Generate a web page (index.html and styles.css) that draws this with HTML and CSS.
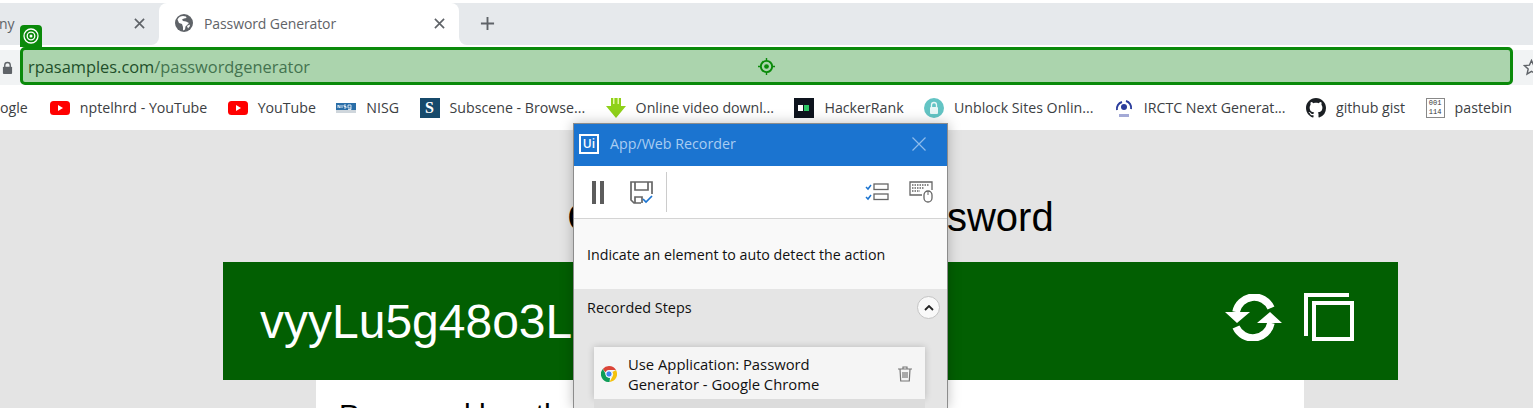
FILE: index.html
```html
<!DOCTYPE html>
<html lang="en">
<head>
  <meta charset="UTF-8">
  <title>Password Generator</title>
  <link rel="stylesheet" href="styles.css">
</head>
<body>

  <section class="tabbar">
    <div class="tab tab-old">
      <span class="tab-title">ny</span>
      <svg class="tab-close" viewBox="0 0 12 12"><path d="M1 1l10 10M11 1L1 11"/></svg>
    </div>
    <div class="tab tab-active">
      <svg class="globe" viewBox="0 0 18 18"><circle cx="9" cy="9" r="9" fill="#5f6368"/><path d="M8 2C6 2 3.5 3 2.5 5.5L4 9l3 1 1 3v3.5l2-1 .5-3L14 9l-3-1.5L8 7 7 5.500 9 4.500l2.500-.5L11 2.500z" fill="#fff"/><path d="M12 12l2.500-1.500.5 1.500-2 2.500z" fill="#fff"/></svg>
      <span class="tab-title">Password Generator</span>
      <svg class="tab-close" viewBox="0 0 12 12"><path d="M1 1l10 10M11 1L1 11"/></svg>
    </div>
    <div class="tab tab-rest">
      <svg class="new-tab" viewBox="0 0 16 16"><path d="M8 1v14M1 8h14"/></svg>
    </div>
  </section>

  <section class="toolbar">
    <svg class="lock" viewBox="0 0 12 14"><path d="M3 6V4a3 3 0 0 1 6 0v2" fill="none" stroke="#5f6368" stroke-width="1.5"/><rect x="1" y="5.5" width="10" height="8" rx="1" fill="#5f6368"/></svg>
    <svg class="star" viewBox="0 0 18 18"><path d="M9 1.500l2.200 5 5.300.5-4 3.600 1.200 5.300L9 13.100l-4.700 2.800 1.200-5.300-4-3.600 5.300-.5z"/></svg>
  </section>

  <nav class="bookmarks">
    <span class="bm bm-cut">ogle</span>
    <a class="bm">
      <svg class="yt" viewBox="0 0 20 14"><rect width="20" height="14" rx="3.5" fill="#f00"/><path d="M8 4l5 3-5 3z" fill="#fff"/></svg>
      nptelhrd - YouTube
    </a>
    <a class="bm">
      <svg class="yt" viewBox="0 0 20 14"><rect width="20" height="14" rx="3.5" fill="#f00"/><path d="M8 4l5 3-5 3z" fill="#fff"/></svg>
      YouTube
    </a>
    <a class="bm">
      <svg class="ico" viewBox="0 0 20 20"><rect y="5" width="20" height="7" fill="#2a6ea8"/><rect y="12" width="20" height="3" fill="#cfd6dc"/><path d="M2 10V7l2 3V7M6 7v3M8 10h2V8.500H8V7h2M12 7h3v3h-3zM15 10v1.500h-3" fill="none" stroke="#fff" stroke-width=".8"/></svg>
      NISG
    </a>
    <a class="bm">
      <span class="ico-sub">S</span>
      Subscene - Browse...
    </a>
    <a class="bm">
      <svg class="ico" viewBox="0 0 20 20"><path d="M5 0h10v8h5L10 20 0 8h5z" fill="#8fd11a"/><path d="M7 0h1.500v6H7zM11.500 0H13v6h-1.500z" fill="#e6f7a8"/></svg>
      Online video downl...
    </a>
    <a class="bm">
      <span class="ico-hr"><i></i></span>
      HackerRank
    </a>
    <a class="bm">
      <svg class="ico" viewBox="0 0 20 20"><circle cx="10" cy="10" r="10" fill="#63c4c4"/><rect x="6" y="9" width="8" height="7" rx="1" fill="#e8f7f7"/><path d="M7.500 9V7a2.500 2.500 0 0 1 5 0v2" fill="none" stroke="#e8f7f7" stroke-width="1.300"/></svg>
      Unblock Sites Onlin...
    </a>
    <a class="bm">
      <svg class="ico" viewBox="0 0 20 20"><path d="M3 12a7 7 0 0 1 5-8M12 3a7 7 0 0 1 5 8" fill="none" stroke="#2a3c9c" stroke-width="2"/><circle cx="10" cy="9" r="3" fill="#2a3c9c"/><rect x="5" y="16" width="10" height="3" fill="#a3a9d6"/></svg>
      IRCTC Next Generat...
    </a>
    <a class="bm">
      <svg class="ico" viewBox="0 0 16 16"><path fill="#1b1f23" d="M8 0C3.580 0 0 3.580 0 8c0 3.540 2.290 6.530 5.470 7.590.4.070.55-.17.55-.38 0-.19-.01-.82-.01-1.490-2.010.37-2.530-.49-2.690-.94-.09-.23-.48-.94-.82-1.130-.28-.15-.68-.52-.01-.53.630-.01 1.080.58 1.230.82.720 1.210 1.870.87 2.330.66.070-.52.280-.87.510-1.070-1.780-.2-3.640-.89-3.640-3.950 0-.87.310-1.590.820-2.150-.08-.2-.36-1.020.08-2.120 0 0 .67-.21 2.200.82.640-.18 1.320-.27 2-.27s1.360.09 2 .27c1.530-1.040 2.200-.82 2.200-.82.440 1.100.16 1.920.08 2.120.510.56.820 1.270.820 2.150 0 3.070-1.870 3.750-3.650 3.950.29.250.54.730.54 1.480 0 1.070-.01 1.930-.01 2.200 0 .21.150.46.550.38A8.010 8.010 0 0 0 16 8c0-4.420-3.580-8-8-8z"/></svg>
      github gist
    </a>
    <a class="bm">
      <span class="ico-paste">001<br>114</span>
      pastebin
    </a>
  </nav>

  <main class="page">
    <h1 class="heading">Create a random password</h1>
    <div class="passbar">
      <span class="pass">vyyLu5g48o3LkQz7</span>
      <div class="pass-actions">
        <svg class="refresh" viewBox="0 0 57 47"><path d="M11 18A18.500 18.500 0 0 1 46 14M46 29A18.500 18.500 0 0 1 11 33" fill="none" stroke="#fff" stroke-width="7.500"/><path d="M0 18h25L12 29zM57 29H32l13-11z" fill="#fff"/></svg>
        <svg class="copy" viewBox="0 0 50 48" fill="none" stroke="#fff" stroke-width="4"><path d="M2 43V2h43"/><rect x="10" y="10" width="38" height="36"/></svg>
      </div>
    </div>
    <div class="card">
      <p class="card-text">Password length</p>
    </div>
  </main>

  <!-- highlight of the selected element, sits over the browser -->
  <div class="hl">
    <span class="hl-tag">
      <svg viewBox="0 0 16 16" fill="none" stroke="#fff"><circle cx="8" cy="8" r="7" stroke-width="1.3"/><circle cx="8" cy="8" r="3.800" stroke-width="1.3"/><circle cx="8" cy="8" r="1.500" fill="#fff" stroke="none"/></svg>
    </span>
    <span class="url"><b>rpasamples.com</b>/passwordgenerator</span>
    <svg class="hl-target" viewBox="0 0 18 18" fill="none" stroke="#0a8a0a"><circle cx="9" cy="9" r="6" stroke-width="2"/><circle cx="9" cy="9" r="2.500" fill="#0a8a0a" stroke="none"/><path d="M9 0v3M9 15v3M0 9h3M15 9h3" stroke-width="1.5"/></svg>
  </div>

  <aside class="recorder">
    <header class="rec-head">
      <span class="rec-logo">Ui</span>
      <span class="rec-title">App/Web Recorder</span>
      <svg class="rec-x" viewBox="0 0 14 14"><path d="M.5.5l13 13M13.500.5l-13 13"/></svg>
    </header>
    <div class="rec-tools">
      <svg class="t-pause" viewBox="0 0 12 23"><rect width="4" height="23" fill="#5c5c5c"/><rect x="8" width="4" height="23" fill="#5c5c5c"/></svg>
      <svg class="t-save" viewBox="0 0 23 23" fill="none" stroke="#666" stroke-width="1.7"><path d="M11 22H4l-3-3V1h21v12"/><path d="M5 1v8h13V1M5 22v-6h7v6"/><path d="M13 18l3 3 6-6" stroke="#1b74d0"/></svg>
      <span class="t-sep"></span>
      <span class="t-spacer"></span>
      <svg class="t-list" viewBox="0 0 24 18" fill="none"><path d="M1 4l2 2 3-4M1 14l2 2 3-4" stroke="#1b74d0" stroke-width="1.5"/><rect x="9" y="1" width="14" height="5.5" stroke="#666" stroke-width="1.3"/><rect x="9" y="11" width="14" height="5.5" stroke="#666" stroke-width="1.3"/></svg>
      <svg class="t-keys" viewBox="0 0 24 22" fill="none" stroke="#666"><path d="M13 14H1V1h22v8" stroke-width="1.3"/><path d="M3 4h17M3 7h12M3 10h8" stroke-width="1.5" stroke-dasharray="1.5 1"/><rect x="15" y="10" width="8" height="11" rx="4" stroke-width="1.3" fill="#fff"/><path d="M19 10v4" stroke-width="1"/></svg>
    </div>
    <div class="rec-hint">Indicate an element to auto detect the action</div>
    <div class="rec-steps">
      <div class="steps-head">
        <span>Recorded Steps</span>
        <button class="collapse"><svg viewBox="0 0 10 6"><path d="M1 5l4-4 4 4"/></svg></button>
      </div>
      <div class="step">
        <svg class="chrome" viewBox="0 0 16 16"><path d="M8 0a8 8 0 0 1 7 4H8a4 4 0 0 0-3.600 2.300L1.800 2.900A8 8 0 0 1 8 0z" fill="#db4437"/><path d="M15 4a8 8 0 0 1-6.500 12l3-5.500A4 4 0 0 0 11.300 6z" fill="#f4c20d"/><path d="M1.800 2.900l3 5.200A4 4 0 0 0 9 11.900L8.500 16A8 8 0 0 1 1.800 2.900z" fill="#0f9d58"/><circle cx="8" cy="8" r="3.200" fill="#4285f4" stroke="#fff"/></svg>
        <span class="step-text">Use Application: Password Generator - Google Chrome</span>
        <svg class="trash" viewBox="0 0 14 16" fill="none" stroke="#777" stroke-width="1.2"><path d="M0 3h14M5 3V1h4v2M2 3l.7 12h8.600L12 3M5 6v6M7 6v6M9 6v6"/></svg>
      </div>
      <div class="step-next"></div>
    </div>
  </aside>

</body>
</html>
```

FILE: styles.css
```css
* {
  box-sizing: border-box;
}

body {
  margin: 0;
  height: 408px;
  overflow: hidden;
  background-color: #fff;
  font-family: "Open Sans", sans-serif;
  position: relative;
}

/* browser tabs */
.tabbar {
  margin-top: 3px;
  height: 42px;
  background: linear-gradient(#e6e9ec 50%, #fff 50%);
  display: flex;
}
.tab {
  height: 42px;
  padding-bottom: 2px;
  display: flex;
  align-items: center;
  font-size: 14px;
  color: #5f6368;
}
.tab-old {
  width: 159px;
  background-color: #e6e9ec;
  border-radius: 0 0 8px 0;
  padding-right: 14px;
  justify-content: space-between;
}
.tab-active {
  width: 300px;
  background-color: #fff;
  border-radius: 8px 8px 0 0;
  padding-left: 16px;
  padding-right: 14px;
}
.tab-rest {
  flex: 1;
  background-color: #e6e9ec;
  border-radius: 0 0 0 8px;
  padding-left: 21px;
}
.tab-title {
  flex: 1;
  letter-spacing: -0.1px;
}
.tab-active .tab-title {
  margin-left: 11px;
}
.tab-old .tab-title {
  flex: none;
  margin-left: -1px;
}
.tab-close {
  width: 11px;
  height: 11px;
  fill: none;
  stroke: #5f6368;
  stroke-width: 1.8;
}
.globe {
  width: 18px;
  height: 18px;
}
.new-tab {
  width: 15px;
  height: 15px;
  fill: none;
  stroke: #5f6368;
  stroke-width: 2;
}

/* address bar */
.toolbar {
  margin-top: 5px;
  height: 35px;
  background-color: #f1f3f4;
  display: flex;
  align-items: center;
  justify-content: space-between;
  padding-left: 2px;
}
.lock {
  width: 11px;
  height: 14px;
}
.star {
  width: 17px;
  height: 17px;
  margin-right: -7px;
  fill: none;
  stroke: #5f6368;
  stroke-width: 1.5;
}

/* bookmarks */
.bookmarks {
  height: 45px;
  background-color: #fff;
  display: flex;
  align-items: center;
  font-size: 14.2px;
  color: #3c4043;
  white-space: nowrap;
}
.bm {
  display: flex;
  align-items: center;
  gap: 10px;
  margin-right: 20.4px;
}
.bm-cut {
  margin-right: 22px;
}
.ico, .yt {
  width: 20px;
  height: 20px;
  flex: none;
}
.yt {
  height: 14px;
}
.ico-sub {
  width: 20px;
  height: 20px;
  background-color: #174a6b;
  color: #fff;
  font: bold 16px/20px "Liberation Serif", serif;
  text-align: center;
}
.ico-hr {
  width: 20px;
  height: 20px;
  background-color: #0e141e;
  display: flex;
  align-items: center;
  justify-content: flex-end;
  padding-right: 5px;
}
.ico-hr i {
  width: 5px;
  height: 6px;
  background-color: #2ec866;
  box-shadow: -6px 0 0 #fff;
}
.ico-paste {
  width: 19px;
  height: 20px;
  border: 1px solid #888;
  font: 7px/9px "Liberation Mono", monospace;
  color: #333;
  text-align: center;
  overflow: hidden;
}

/* page under the recorder, scrolled a bit sideways */
.page {
  height: 278px;
  background-color: #e4e4e4;
  padding-left: 88px;
  display: flex;
  flex-direction: column;
  align-items: center;
}
.heading {
  margin: 64px 0 22px;
  font: 400 40px/46px "Liberation Sans", Arial, sans-serif;
  word-spacing: 1.3px;
  color: #000;
}
.passbar {
  width: 1175px;
  height: 118px;
  flex: none;
  background-color: #025f02;
  color: #fff;
  display: flex;
  align-items: center;
  justify-content: space-between;
  padding: 0 44px 0 37px;
}
.pass {
  font: 48px "Liberation Sans", Arial, sans-serif;
}
.pass-actions {
  display: flex;
  align-items: center;
  gap: 22px;
  margin-bottom: 8px;
}
.refresh {
  width: 57px;
  height: 47px;
}
.copy {
  width: 50px;
  height: 48px;
}
.card {
  width: 988px;
  height: 60px;
  flex: none;
  margin-right: 1px;
  background-color: #fff;
  padding: 18px 23px;
}
.card-text {
  margin: 0;
  font: 30px "Liberation Sans", Arial, sans-serif;
  color: #000;
}

/* element highlight */
.hl {
  position: absolute;
  left: 20px;
  top: 47px;
  width: 1493px;
  height: 38px;
  background-color: #abd4ad;
  border: 3px solid #0a8a0a;
  border-radius: 5px;
  display: flex;
  align-items: center;
  padding-left: 5px;
}
.url {
  font-size: 16.4px;
  color: #43734f;
}
.url b {
  font-weight: 400;
  color: #1f4f2a;
}
.hl-tag {
  position: absolute;
  left: -3px;
  top: -25px;
  width: 22px;
  height: 22px;
  background-color: #0a8a0a;
  border-radius: 4px 4px 0 0;
  display: flex;
  align-items: center;
  justify-content: center;
}
.hl-tag svg {
  width: 16px;
  height: 16px;
}
.hl-target {
  position: absolute;
  left: 735px;
  top: 8px;
  width: 17px;
  height: 17px;
}

/* recorder window */
.recorder {
  position: absolute;
  left: 573px;
  top: 123px;
  width: 375px;
  height: 285px;
  background-color: #f9f9f9;
  border: 1px solid #8c8c8c;
  border-bottom: 0;
  box-shadow: 0 0 12px rgba(0, 0, 0, 0.25);
  font-size: 14.25px;
  color: #111;
}
.rec-head {
  height: 42px;
  background-color: #1b74d0;
  display: flex;
  align-items: center;
  padding: 0 21px 3px 5px;
}
.rec-logo {
  width: 20px;
  height: 20px;
  border: 2px solid #fff;
  color: #fff;
  font-size: 12px;
  line-height: 16px;
  font-weight: 600;
  text-align: center;
}
.rec-title {
  flex: 1;
  margin-left: 11px;
  color: #a9cdf2;
}
.rec-x {
  width: 14px;
  height: 14px;
  fill: none;
  stroke: #8ebcec;
  stroke-width: 1.2;
}
.rec-tools {
  height: 53px;
  background-color: #fff;
  border-bottom: 1px solid #d4d4d4;
  display: flex;
  align-items: center;
  padding: 0 14px 0 18px;
}
.t-pause {
  width: 12px;
  height: 23px;
}
.t-save {
  width: 23px;
  height: 23px;
  margin-left: 26px;
}
.t-sep {
  width: 1px;
  height: 40px;
  background-color: #ccc;
  margin-left: 13px;
}
.t-spacer {
  flex: 1;
}
.t-list {
  width: 24px;
  height: 18px;
}
.t-keys {
  width: 24px;
  height: 22px;
  margin-left: 20px;
}
.rec-hint {
  height: 70px;
  padding: 26px 13px 0;
}
.rec-steps {
  background-color: #e5e5e5;
  height: 119px;
  overflow: hidden;
}
.steps-head {
  display: flex;
  align-items: center;
  justify-content: space-between;
  padding: 7px 7px 0 13px;
  font-weight: 500;
  font-size: 14.4px;
}
.collapse {
  width: 23px;
  height: 23px;
  padding: 0;
  border: 1px solid #c4c4c4;
  border-radius: 50%;
  background-color: #f9f9f9;
  display: flex;
  align-items: center;
  justify-content: center;
}
.collapse svg {
  width: 10px;
  height: 6px;
  fill: none;
  stroke: #222;
  stroke-width: 1.8;
}
.step {
  width: 331px;
  height: 52px;
  margin: 28px 0 0 20px;
  background-color: #f5f5f5;
  box-shadow: 0 0 7px rgba(0, 0, 0, 0.2);
  display: flex;
  align-items: center;
  padding: 2px 13px 0 7px;
  line-height: 20px;
}
.chrome {
  width: 16px;
  height: 16px;
  flex: none;
}
.step-text {
  flex: 1;
  margin-left: 11px;
  font-weight: 500;
  font-size: 14.8px;
  padding-right: 30px;
}
.trash {
  width: 14px;
  height: 16px;
  flex: none;
}
.step-next {
  width: 331px;
  height: 30px;
  margin-left: 20px;
  background-color: #dcdcdc;
}
```
